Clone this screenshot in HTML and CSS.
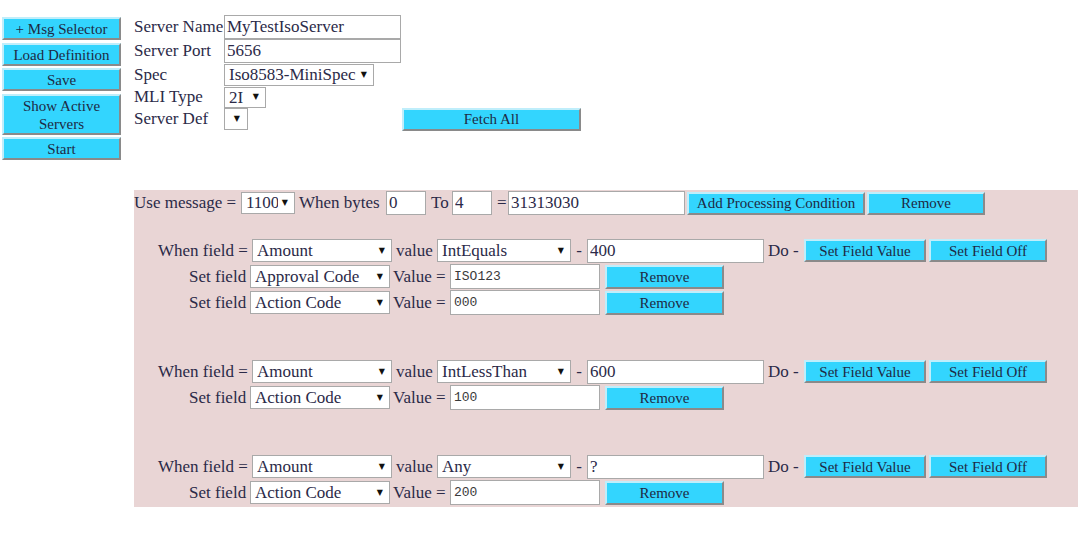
FILE: index.html
```html
<!DOCTYPE html>
<html>
<head>
<meta charset="utf-8">
<link rel="stylesheet" href="styles.css">
</head>
<body>
<div class="page">
  <div class="sidebar">
    <button class="btn side">+ Msg Selector</button>
    <button class="btn side">Load Definition</button>
    <button class="btn side">Save</button>
    <button class="btn side">Show Active Servers</button>
    <button class="btn side">Start</button>
  </div>
  <div class="main">
    <div class="server-form">
      <span class="lbl r1">Server Name</span>
      <input class="txt name r1" value="MyTestIsoServer">
      <span class="cell r1"></span>

      <span class="lbl r2">Server Port</span>
      <input class="txt name r2" value="5656">
      <span class="cell r2"></span>

      <span class="lbl r3">Spec</span>
      <span class="sel w-spec"><select><option>Iso8583-MiniSpec</option></select></span>
      <span class="cell"></span>

      <span class="lbl r4">MLI Type</span>
      <span class="sel w-mli"><select><option>2I</option></select></span>
      <span class="cell"></span>

      <span class="lbl r5">Server Def</span>
      <span class="sel w-def"><select><option></option></select></span>
      <button class="btn fetch">Fetch All</button>
    </div>

    <div class="rules">
      <div class="head-row">
        <span class="t t-use">Use message =</span>
        <span class="sel w-msg"><select><option>1100</option></select></span>
        <span class="t t-bytes">When bytes</span>
        <input class="txt w-byte" value="0">
        <span class="t t-to">To</span>
        <input class="txt w-byte" value="4">
        <span class="t t-eq">=</span>
        <input class="txt w-hex" value="31313030">
        <button class="btn b-add">Add Processing Condition</button>
        <button class="btn b-rem-head">Remove</button>
      </div>

      <div class="cond">
        <div class="when-row">
          <span class="t t-when">When field =</span>
          <span class="sel w-field"><select><option>Amount</option></select></span>
          <span class="t t-value">value</span>
          <span class="sel w-op"><select><option>IntEquals</option></select></span>
          <span class="t t-dash">-</span>
          <input class="txt w-cmp" value="400">
          <span class="t t-do">Do -</span>
          <button class="btn b-setval">Set Field Value</button>
          <button class="btn b-setoff">Set Field Off</button>
        </div>
        <div class="set-row">
          <span class="t t-set">Set field</span>
          <span class="sel w-field"><select><option>Approval Code</option></select></span>
          <span class="t t-veq">Value =</span>
          <input class="txt mono w-val" value="ISO123">
          <button class="btn b-rem">Remove</button>
        </div>
        <div class="set-row">
          <span class="t t-set">Set field</span>
          <span class="sel w-field"><select><option>Action Code</option></select></span>
          <span class="t t-veq">Value =</span>
          <input class="txt mono w-val" value="000">
          <button class="btn b-rem">Remove</button>
        </div>
      </div>

      <div class="cond">
        <div class="when-row">
          <span class="t t-when">When field =</span>
          <span class="sel w-field"><select><option>Amount</option></select></span>
          <span class="t t-value">value</span>
          <span class="sel w-op"><select><option>IntLessThan</option></select></span>
          <span class="t t-dash">-</span>
          <input class="txt w-cmp" value="600">
          <span class="t t-do">Do -</span>
          <button class="btn b-setval">Set Field Value</button>
          <button class="btn b-setoff">Set Field Off</button>
        </div>
        <div class="set-row">
          <span class="t t-set">Set field</span>
          <span class="sel w-field"><select><option>Action Code</option></select></span>
          <span class="t t-veq">Value =</span>
          <input class="txt mono w-val" value="100">
          <button class="btn b-rem">Remove</button>
        </div>
      </div>

      <div class="cond">
        <div class="when-row">
          <span class="t t-when">When field =</span>
          <span class="sel w-field"><select><option>Amount</option></select></span>
          <span class="t t-value">value</span>
          <span class="sel w-op"><select><option>Any</option></select></span>
          <span class="t t-dash">-</span>
          <input class="txt w-cmp" value="?">
          <span class="t t-do">Do -</span>
          <button class="btn b-setval">Set Field Value</button>
          <button class="btn b-setoff">Set Field Off</button>
        </div>
        <div class="set-row">
          <span class="t t-set">Set field</span>
          <span class="sel w-field"><select><option>Action Code</option></select></span>
          <span class="t t-veq">Value =</span>
          <input class="txt mono w-val" value="200">
          <button class="btn b-rem">Remove</button>
        </div>
      </div>
    </div>
  </div>
</div>
</body>
</html>
```

FILE: styles.css
```css
html, body {
  margin: 0;
  padding: 0;
  background: #ffffff;
}

body {
  font-family: "Liberation Serif", "Times New Roman", serif;
  font-size: 17px;
  color: #2b2a48;
}

.page {
  display: flex;
  align-items: flex-start;
}

/* ---------- buttons ---------- */
.btn {
  font-family: "Liberation Serif", "Times New Roman", serif;
  font-size: 15px;
  color: #1e2a44;
  background: #33d5fe;
  border-style: solid;
  border-width: 2px;
  border-color: #bfeefb #8a8a8a #8a8a8a #bfeefb;
  padding: 0;
  margin: 0;
  line-height: 18px;
  height: 23px;
  text-align: center;
  cursor: pointer;
  flex-shrink: 0;
  box-sizing: border-box;
}

.sidebar {
  width: 119px;
  margin-left: 2px;
  margin-top: 17px;
  display: flex;
  flex-direction: column;
  gap: 2.5px;
  flex-shrink: 0;
}

.btn.side {
  width: 119px;
  height: auto;
  padding: 1px 0 0 0;
}

/* ---------- main ---------- */
.main {
  flex: 1;
  margin-left: 13px;
  min-width: 0;
}

.server-form {
  margin-top: 15px;
  display: grid;
  grid-template-columns: 90px 178px auto;
  grid-template-rows: 24px 24px 23px 22px 22px;
  align-items: center;
}

.lbl {
  white-space: nowrap;
  line-height: 20px;
}

.txt {
  box-sizing: border-box;
  font-family: "Liberation Serif", "Times New Roman", serif;
  font-size: 17px;
  color: #2b2a48;
  background: #ffffff;
  border: 1px solid #a9a9a9;
  padding: 0 2px;
  margin: 0;
  height: 24px;
  outline: none;
  flex-shrink: 0;
  min-width: 0;
}

.txt.name {
  width: 177px;
}

.txt.mono {
  font-family: "Liberation Mono", "Courier New", monospace;
  font-size: 13px;
  color: #3a3a3a;
  padding-left: 3px;
  height: 25px;
}

/* selects with drawn arrow */
.sel {
  position: relative;
  display: inline-flex;
  box-sizing: border-box;
  height: 22px;
  flex-shrink: 0;
}

.sel select {
  -webkit-appearance: none;
  appearance: none;
  box-sizing: border-box;
  width: 100%;
  min-width: 0;
  height: 100%;
  margin: 0;
  border: 1px solid #a9a9a9;
  border-radius: 0;
  background: #ffffff;
  font-family: "Liberation Serif", "Times New Roman", serif;
  font-size: 17px;
  color: #2b2a48;
  padding: 0 16px 0 4px;
  line-height: 20px;
}

.sel::after {
  content: "\25BC";
  position: absolute;
  right: 7px;
  top: 50%;
  transform: translateY(-50%);
  font-family: "DejaVu Sans", sans-serif;
  font-size: 8px;
  line-height: 8px;
  color: #111111;
  pointer-events: none;
}

.w-spec { width: 150px; }
.w-mli { width: 42px; height: 21px; }
.w-def { width: 24px; }
.w-def::after { right: 8px; }

.fetch {
  width: 179px;
  height: 23px;
  justify-self: start;
}

/* ---------- rules panel ---------- */
.rules {
  margin-top: 60px;
  background: #e9d5d5;
  padding: 1px 0 2px 0;
  display: flex;
  flex-direction: column;
}

.t {
  white-space: nowrap;
  box-sizing: border-box;
  line-height: 20px;
  flex-shrink: 0;
}

.head-row,
.when-row,
.set-row {
  display: flex;
  align-items: center;
}

.head-row {
  height: 24px;
}

.t-use { width: 107px; }
.w-msg { width: 54px; }
.t-bytes { width: 91px; padding-left: 4px; }
.w-byte { width: 40px; }
.t-to { width: 26px; padding-left: 5px; }
.t-eq { width: 16px; padding-left: 5px; }
.w-hex { width: 177px; }
.b-add { width: 178px; margin-left: 2px; }
.b-rem-head { width: 118px; margin-left: 2px; }

.cond {
  margin-top: 44px;
  display: flex;
  flex-direction: column;
  gap: 1px;
}

.head-row + .cond {
  margin-top: 23px;
}

.when-row {
  padding-left: 24px;
  height: 25px;
}

.set-row {
  padding-left: 55px;
  height: 25px;
}

.t-when { width: 94px; }
.w-field { width: 140px; height: 23px; }
.t-value { width: 45px; padding-left: 4px; }
.w-op { width: 134px; height: 23px; }
.t-dash { width: 16px; text-align: center; }
.w-cmp { width: 177px; }
.t-do { width: 40px; padding-left: 4px; }
.b-setval { width: 122px; }
.b-setoff { width: 118px; margin-left: 3px; }

.t-set { width: 61px; }
.t-veq { width: 60px; padding-left: 3px; }
.w-val { width: 150px; }
.b-rem { width: 119px; margin-left: 5px; height: 24px; }
```
